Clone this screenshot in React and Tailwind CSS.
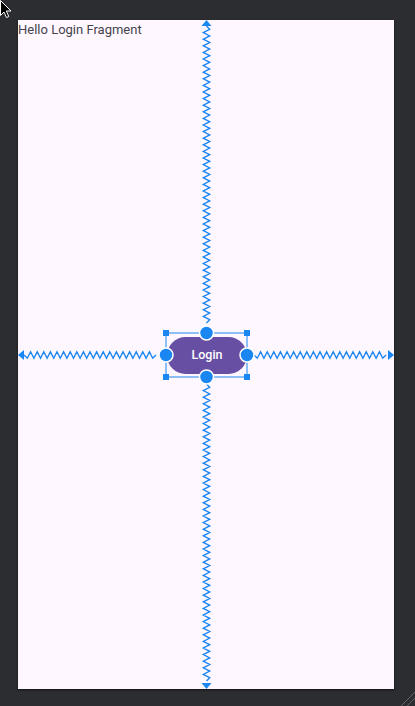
import React from 'react';

const BLUE = '#1a86f2';

// zigzag polyline between two points along one axis
const zigzag = (from, to, fixed, axis, step = 3.3, amp = 3.2) => {
  const pts = [];
  const dir = to > from ? 1 : -1;
  const n = Math.floor(Math.abs(to - from) / step);
  for (let i = 0; i <= n; i++) {
    const p = from + dir * i * step;
    const off = i === 0 || i === n ? 0 : (i % 2 ? amp : -amp);
    pts.push(axis === 'v' ? `${fixed + off},${p}` : `${p},${fixed + off}`);
  }
  return pts.join(' ');
};

const Constraints = () => {
  const cx = 188.5;
  const cy = 335;
  const l = 148, r = 229, t = 313, b = 357;
  return (
    <svg className="absolute inset-0" width="376" height="669" viewBox="0 0 376 669">
      <g fill="none" stroke={BLUE} strokeWidth="1.4" strokeLinejoin="miter">
        <polyline points={zigzag(6, t - 7, cx, 'v')} />
        <polyline points={zigzag(b + 7, 663, cx, 'v')} />
        <polyline points={zigzag(6, l - 7, cy, 'h')} />
        <polyline points={zigzag(r + 7, 370, cy, 'h')} />
        <rect x={l} y={t} width={r - l} height={b - t} strokeWidth="1" />
      </g>
      <g fill={BLUE}>
        <polygon points={`${cx},0 ${cx - 5},6 ${cx + 5},6`} />
        <polygon points={`${cx},669 ${cx - 5},663 ${cx + 5},663`} />
        <polygon points={`0,${cy} 6,${cy - 5} 6,${cy + 5}`} />
        <polygon points={`376,${cy} 370,${cy - 5} 370,${cy + 5}`} />
      </g>
      <g fill={BLUE}>
        <rect x={l - 3} y={t - 3} width="6" height="6" />
        <rect x={r - 3} y={t - 3} width="6" height="6" />
        <rect x={l - 3} y={b - 3} width="6" height="6" />
        <rect x={r - 3} y={b - 3} width="6" height="6" />
      </g>
      <g fill={BLUE} stroke="#ffffff" strokeWidth="1.5">
        <circle cx={cx} cy={t} r="7" />
        <circle cx={cx} cy={b} r="7" />
        <circle cx={l} cy={cy} r="7" />
        <circle cx={r} cy={cy} r="7" />
      </g>
    </svg>
  );
};

export default function App() {
  return (
    <div className="relative w-[415px] h-[706px] bg-[#2b2d30] pt-[20px] pl-[18px] overflow-hidden">
      <div className="relative w-[376px] h-[669px] bg-[#fef7ff] shadow-[0_1px_2px_rgba(0,0,0,0.6)]">
        <p
          className="pt-[2px] text-[13px] leading-[15px] text-[#45434a]"
          style={{ fontFamily: 'Roboto, sans-serif' }}
        >
          Hello Login Fragment
        </p>
        <button
          className="absolute left-[149px] top-[317px] w-[80px] h-[37px] rounded-full bg-[#6750a4] text-white text-[12.5px] font-medium"
          style={{ fontFamily: 'Roboto, sans-serif' }}
        >
          Login
        </button>
        <Constraints />
      </div>

      {/* mouse pointer */}
      <svg className="absolute left-0 top-0" width="13" height="20" viewBox="0 0 13 20">
        <path d="M0.5 0.5 L0.5 15.5 L4 12 L6.5 17.5 L8.8 16.5 L6.3 11 L11 11 Z" fill="#000" stroke="#fff" strokeWidth="1" />
      </svg>

      {/* resize grip */}
      <svg className="absolute right-0 bottom-0" width="16" height="16" viewBox="0 0 16 16">
        <g stroke="#5e6167" strokeWidth="1">
          <line x1="2" y1="16" x2="16" y2="2" />
          <line x1="8" y1="16" x2="16" y2="8" />
        </g>
      </svg>
    </div>
  );
}
